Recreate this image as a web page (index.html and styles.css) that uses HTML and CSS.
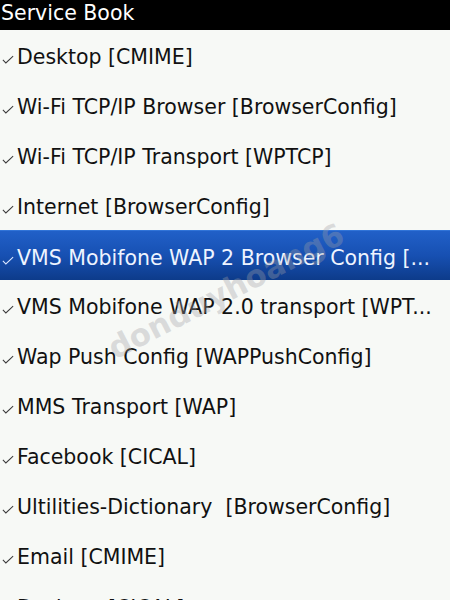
FILE: index.html
```html
<!DOCTYPE html>
<html>
<head>
<meta charset="utf-8">
<link rel="stylesheet" href="styles.css">
</head>
<body>
<div class="screen">
  <div class="title">Service Book</div>
  <ul class="list">
    <li class="row"><svg class="tick" viewBox="0 0 14 10"><path d="M1 5.5 L4.5 9 L13 1"/></svg><span class="label">Desktop [CMIME]</span></li>
    <li class="row"><svg class="tick" viewBox="0 0 14 10"><path d="M1 5.5 L4.5 9 L13 1"/></svg><span class="label">Wi-Fi TCP/IP Browser [BrowserConfig]</span></li>
    <li class="row"><svg class="tick" viewBox="0 0 14 10"><path d="M1 5.5 L4.5 9 L13 1"/></svg><span class="label">Wi-Fi TCP/IP Transport [WPTCP]</span></li>
    <li class="row"><svg class="tick" viewBox="0 0 14 10"><path d="M1 5.5 L4.5 9 L13 1"/></svg><span class="label">Internet [BrowserConfig]</span></li>
    <li class="row selected"><svg class="tick" viewBox="0 0 14 10"><path d="M1 5.5 L4.5 9 L13 1"/></svg><span class="label">VMS Mobifone WAP 2 Browser Config [...</span></li>
    <li class="row"><svg class="tick" viewBox="0 0 14 10"><path d="M1 5.5 L4.5 9 L13 1"/></svg><span class="label">VMS Mobifone WAP 2.0 transport [WPT...</span></li>
    <li class="row"><svg class="tick" viewBox="0 0 14 10"><path d="M1 5.5 L4.5 9 L13 1"/></svg><span class="label">Wap Push Config [WAPPushConfig]</span></li>
    <li class="row"><svg class="tick" viewBox="0 0 14 10"><path d="M1 5.5 L4.5 9 L13 1"/></svg><span class="label">MMS Transport [WAP]</span></li>
    <li class="row"><svg class="tick" viewBox="0 0 14 10"><path d="M1 5.5 L4.5 9 L13 1"/></svg><span class="label">Facebook [CICAL]</span></li>
    <li class="row"><svg class="tick" viewBox="0 0 14 10"><path d="M1 5.5 L4.5 9 L13 1"/></svg><span class="label">Ultilities-Dictionary&nbsp; [BrowserConfig]</span></li>
    <li class="row"><svg class="tick" viewBox="0 0 14 10"><path d="M1 5.5 L4.5 9 L13 1"/></svg><span class="label">Email [CMIME]</span></li>
    <li class="row last"><svg class="tick" viewBox="0 0 14 10"><path d="M1 5.5 L4.5 9 L13 1"/></svg><span class="label">Desktop [CICAL]</span></li>
  </ul>
  <div class="watermark">donduyhoang6</div>
</div>
</body>
</html>
```

FILE: styles.css
```css
html, body {
  margin: 0;
  padding: 0;
  background: #f7f9f6;
}
.screen {
  position: relative;
  width: 450px;
  height: 600px;
  overflow: hidden;
  font-family: "DejaVu Sans", sans-serif;
  background: #f7f9f6;
}
.title {
  height: 30px;
  background: #000;
  color: #fff;
  font-size: 20.5px;
  line-height: 26px;
  padding-left: 1px;
  box-sizing: border-box;
}
.list {
  list-style: none;
  margin: 0;
  padding: 0;
}
.row {
  height: 50px;
  display: flex;
  align-items: center;
  padding-left: 2px;
  padding-top: 4px;
  color: #111;
  font-size: 20.5px;
  white-space: nowrap;
  box-sizing: border-box;
}
.row.last {
  height: 40px;
  align-items: flex-end;
  padding-top: 0;
}
.row .label {
  margin-left: 3px;
}
.tick {
  width: 12px;
  height: 9px;
  margin-top: 5px;
  flex: none;
}
.tick path {
  fill: none;
  stroke: #3a3a3a;
  stroke-width: 1.2;
}
.row.selected {
  background: linear-gradient(to bottom, #2160c8 0%, #1750b2 50%, #0d3b8a 100%);
  color: #eef4ff;
  border-top: 1px solid #3174d8;
}
.row.selected .tick path {
  stroke: #dde8ff;
}
.watermark {
  position: absolute;
  left: 110px;
  top: 330px;
  line-height: 40px;
  font-size: 31px;
  font-weight: bold;
  color: rgba(160, 160, 165, 0.35);
  transform: rotate(-27deg);
  transform-origin: left center;
  font-family: "DejaVu Sans", sans-serif;
}
```
